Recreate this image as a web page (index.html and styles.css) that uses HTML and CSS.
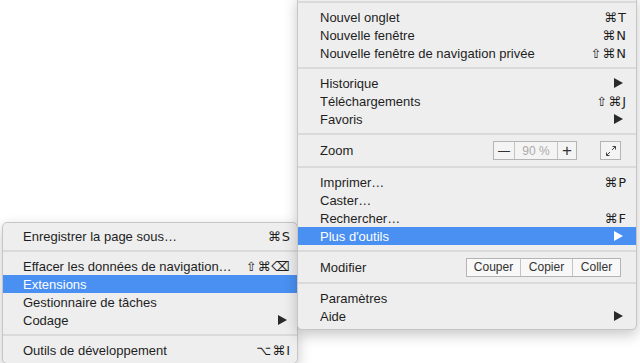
FILE: index.html
```html
<!DOCTYPE html>
<html lang="fr">
<head>
    <meta charset="UTF-8">
    <title>Menu Chrome - Plus d'outils</title>
    <link rel="stylesheet" href="styles.css">
</head>
<body>
    <div class="menu sub-menu">
        <div class="item"><span>Enregistrer la page sous…</span><span class="key">⌘S</span></div>
        <div class="sep"></div>
        <div class="item"><span>Effacer les données de navigation…</span><span class="key">⇧⌘⌫</span></div>
        <div class="item active"><span>Extensions</span></div>
        <div class="item"><span>Gestionnaire de tâches</span></div>
        <div class="item"><span>Codage</span><span class="arrow"></span></div>
        <div class="sep"></div>
        <div class="item"><span>Outils de développement</span><span class="key">⌥⌘I</span></div>
    </div>

    <div class="menu main-menu">
        <div class="sep"></div>
        <div class="item"><span>Nouvel onglet</span><span class="key">⌘T</span></div>
        <div class="item"><span>Nouvelle fenêtre</span><span class="key">⌘N</span></div>
        <div class="item"><span>Nouvelle fenêtre de navigation privée</span><span class="key">⇧⌘N</span></div>
        <div class="sep"></div>
        <div class="item"><span>Historique</span><span class="arrow"></span></div>
        <div class="item"><span>Téléchargements</span><span class="key">⇧⌘J</span></div>
        <div class="item"><span>Favoris</span><span class="arrow"></span></div>
        <div class="sep"></div>
        <div class="item zoom-row">
            <span>Zoom</span>
            <div class="controls">
                <div class="btn-group">
                    <span class="cell minus">—</span>
                    <span class="cell value">90 %</span>
                    <span class="cell plus">+</span>
                </div>
                <span class="fullscreen">
                    <svg width="12" height="12" viewBox="0 0 12 12" fill="none" stroke="#444" stroke-width="1">
                        <path d="M7 5 L10.5 1.5 M7.5 1.5 H10.5 V4.5"/>
                        <path d="M5 7 L1.5 10.5 M1.5 7.5 V10.5 H4.5"/>
                    </svg>
                </span>
            </div>
        </div>
        <div class="sep"></div>
        <div class="item"><span>Imprimer…</span><span class="key">⌘P</span></div>
        <div class="item"><span>Caster…</span></div>
        <div class="item"><span>Rechercher…</span><span class="key">⌘F</span></div>
        <div class="item active"><span>Plus d'outils</span><span class="arrow"></span></div>
        <div class="sep"></div>
        <div class="item edit-row">
            <span>Modifier</span>
            <div class="btn-group edit">
                <span class="cell cut">Couper</span>
                <span class="cell copy">Copier</span>
                <span class="cell paste">Coller</span>
            </div>
        </div>
        <div class="sep"></div>
        <div class="item"><span>Paramètres</span></div>
        <div class="item"><span>Aide</span><span class="arrow"></span></div>
    </div>
</body>
</html>
```

FILE: styles.css
```css
body {
    margin: 0;
    background-color: #fff;
    font-family: "Liberation Sans", "DejaVu Sans", sans-serif;
    font-size: 13px;
    color: #1e1e1e;
    overflow: hidden;
    height: 363px;
}
.menu {
    position: absolute;
    background-color: #eeeeee;
    border: 1px solid #c6c6c6;
    box-shadow: 0 5px 14px rgba(0, 0, 0, 0.22);
}
.main-menu {
    left: 297px;
    top: -5px;
    width: 338px;
    padding-bottom: 4px;
    border-radius: 0 0 5px 5px;
    z-index: 2;
}
.sub-menu {
    left: 2px;
    top: 222px;
    width: 294px;
    padding: 4px 0;
    border-radius: 5px;
    z-index: 1;
}
.item {
    display: flex;
    justify-content: space-between;
    align-items: center;
    height: 18px;
    padding: 0 10px 0 22px;
    white-space: nowrap;
}
.sub-menu .item {
    padding: 0 7px 0 20px;
}
.item.active {
    background-color: #4a8ff2;
    color: #fff;
}
.key {
    font-family: "DejaVu Sans", sans-serif;
    font-size: 13px;
    letter-spacing: 1px;
    margin-right: -1px;
}
.arrow {
    width: 0;
    height: 0;
    margin-right: 3px;
    border-top: 5px solid transparent;
    border-bottom: 5px solid transparent;
    border-left: 9px solid #2a2a2a;
}
.active .arrow {
    border-left-color: #fff;
}
.sep {
    height: 2px;
    margin: 5px 0;
    background-color: #dadada;
}
.zoom-row {
    height: 21px;
}
.edit-row {
    height: 20px;
}
.controls {
    display: flex;
    align-items: center;
    gap: 23px;
}
.btn-group {
    display: flex;
    border: 1px solid #b4b4b4;
    background-color: #f4f4f4;
}
.btn-group .cell {
    display: flex;
    align-items: center;
    justify-content: center;
    height: 17px;
    border-left: 1px solid #c4c4c4;
}
.btn-group .cell:first-child {
    border-left: none;
}
.minus {
    width: 20px;
    font-size: 12px;
    color: #333;
}
.value {
    width: 42px;
    color: #ababab;
    font-size: 12px;
}
.plus {
    width: 18px;
    font-size: 17px;
    font-weight: 300;
    color: #333;
}
.fullscreen {
    display: flex;
    align-items: center;
    justify-content: center;
    width: 19px;
    height: 17px;
    border: 1px solid #b4b4b4;
    background-color: #f4f4f4;
    margin-right: 5px;
}
.edit {
    margin-right: 5px;
    background-color: #f8f8f8;
}
.edit .cell {
    font-size: 12px;
    color: #333;
}
.cut {
    width: 53px;
}
.copy {
    width: 51px;
}
.paste {
    width: 47px;
}
```
